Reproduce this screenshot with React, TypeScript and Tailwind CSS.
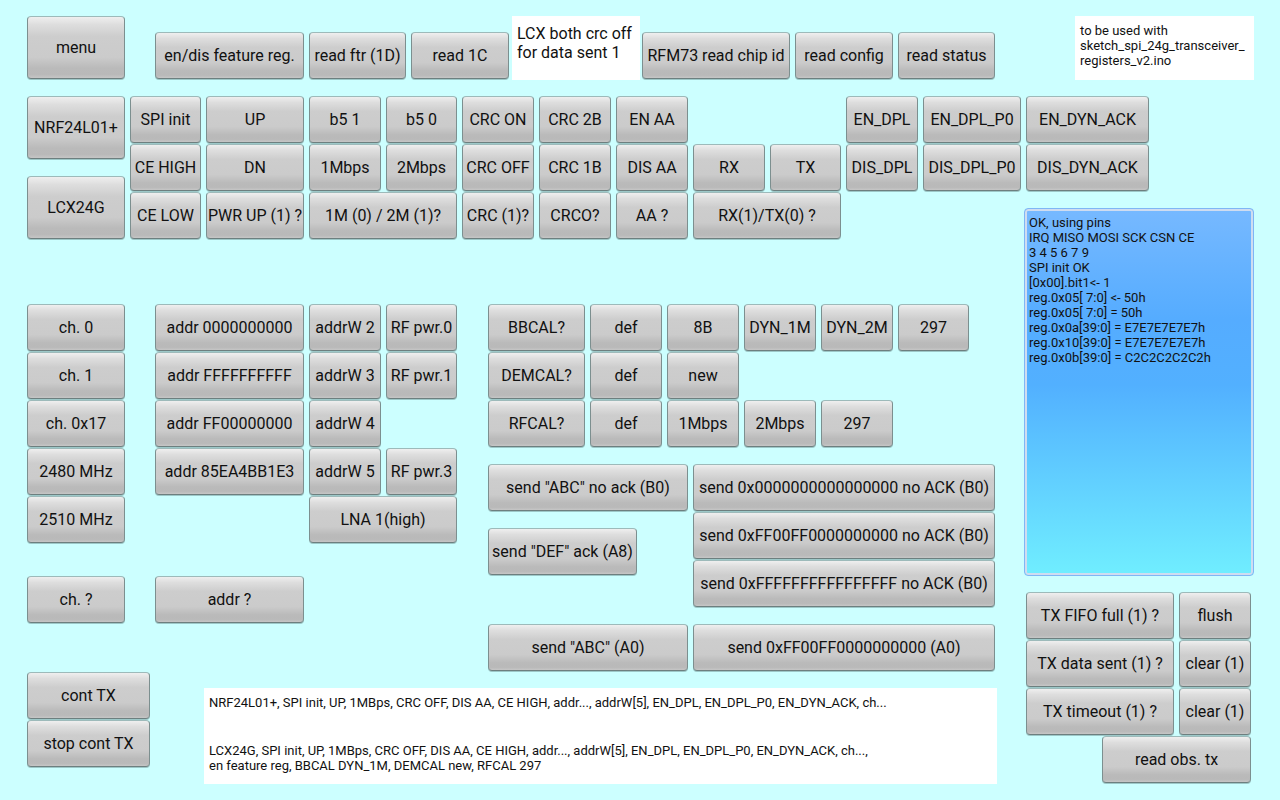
import type { ReactNode } from "react";

type Cell = { label: string; at: string };

const keyClass =
  "mb-px ml-0.5 mr-[3px] flex min-w-0 cursor-pointer items-center justify-center whitespace-nowrap rounded-[4px] border border-t-[#9dbaba] border-x-[#7c8f8f] border-b-[#6d7f7f] bg-[linear-gradient(to_bottom,#efefef_0%,#dedede_12%,#cdcdcd_32%,#cbcbcb_66%,#bababa_84%,#b9b9b9_94%,#c6c6c6_100%)] pb-px text-[16px] leading-[19px] text-[#111111] shadow-[0_1px_0_#9cc8c8] active:brightness-90";

function Panel({ name, at, cells, children }: { name: string; at: string; cells: Cell[]; children?: ReactNode }) {
  return (
    <section aria-label={name} className={`grid grid-cols-subgrid grid-rows-subgrid ${at}`}>
      {cells.map((cell) => (
        <button key={cell.at} type="button" className={`${keyClass} ${cell.at}`}>
          {cell.label}
        </button>
      ))}
      {children}
    </section>
  );
}

const toolbar: Cell[] = [
  { label: "menu", at: "col-start-1 col-span-4 row-start-1 row-span-4" },
  { label: "en/dis feature reg.", at: "col-start-6 col-span-6 row-start-2 row-span-3" },
  { label: "read ftr (1D)", at: "col-start-12 col-span-4 row-start-2 row-span-3" },
  { label: "read 1C", at: "col-start-16 col-span-4 row-start-2 row-span-3" },
  { label: "RFM73 read chip id", at: "col-start-25 col-span-6 row-start-2 row-span-3" },
  { label: "read config", at: "col-start-31 col-span-4 row-start-2 row-span-3" },
  { label: "read status", at: "col-start-35 col-span-4 row-start-2 row-span-3" },
];

const chips: Cell[] = [
  { label: "NRF24L01+", at: "col-span-4 row-start-1 row-span-4" },
  { label: "LCX24G", at: "col-span-4 row-start-6 row-span-4" },
];

const radio: Cell[] = [
  { label: "SPI init", at: "col-start-1 col-span-3 row-start-1 row-span-3" },
  { label: "UP", at: "col-start-4 col-span-4 row-start-1 row-span-3" },
  { label: "b5 1", at: "col-start-8 col-span-3 row-start-1 row-span-3" },
  { label: "b5 0", at: "col-start-11 col-span-3 row-start-1 row-span-3" },
  { label: "CRC ON", at: "col-start-14 col-span-3 row-start-1 row-span-3" },
  { label: "CRC 2B", at: "col-start-17 col-span-3 row-start-1 row-span-3" },
  { label: "EN AA", at: "col-start-20 col-span-3 row-start-1 row-span-3" },
  { label: "EN_DPL", at: "col-start-29 col-span-3 row-start-1 row-span-3" },
  { label: "EN_DPL_P0", at: "col-start-32 col-span-4 row-start-1 row-span-3" },
  { label: "EN_DYN_ACK", at: "col-start-36 col-span-5 row-start-1 row-span-3" },
  { label: "CE HIGH", at: "col-start-1 col-span-3 row-start-4 row-span-3" },
  { label: "DN", at: "col-start-4 col-span-4 row-start-4 row-span-3" },
  { label: "1Mbps", at: "col-start-8 col-span-3 row-start-4 row-span-3" },
  { label: "2Mbps", at: "col-start-11 col-span-3 row-start-4 row-span-3" },
  { label: "CRC OFF", at: "col-start-14 col-span-3 row-start-4 row-span-3" },
  { label: "CRC 1B", at: "col-start-17 col-span-3 row-start-4 row-span-3" },
  { label: "DIS AA", at: "col-start-20 col-span-3 row-start-4 row-span-3" },
  { label: "RX", at: "col-start-23 col-span-3 row-start-4 row-span-3" },
  { label: "TX", at: "col-start-26 col-span-3 row-start-4 row-span-3" },
  { label: "DIS_DPL", at: "col-start-29 col-span-3 row-start-4 row-span-3" },
  { label: "DIS_DPL_P0", at: "col-start-32 col-span-4 row-start-4 row-span-3" },
  { label: "DIS_DYN_ACK", at: "col-start-36 col-span-5 row-start-4 row-span-3" },
  { label: "CE LOW", at: "col-start-1 col-span-3 row-start-7 row-span-3" },
  { label: "PWR UP (1) ?", at: "col-start-4 col-span-4 row-start-7 row-span-3" },
  { label: "1M (0) / 2M (1)?", at: "col-start-8 col-span-6 row-start-7 row-span-3" },
  { label: "CRC (1)?", at: "col-start-14 col-span-3 row-start-7 row-span-3" },
  { label: "CRCO?", at: "col-start-17 col-span-3 row-start-7 row-span-3" },
  { label: "AA ?", at: "col-start-20 col-span-3 row-start-7 row-span-3" },
  { label: "RX(1)/TX(0) ?", at: "col-start-23 col-span-6 row-start-7 row-span-3" },
];

const channels: Cell[] = [
  { label: "ch. 0", at: "col-span-4 row-start-1 row-span-3" },
  { label: "ch. 1", at: "col-span-4 row-start-4 row-span-3" },
  { label: "ch. 0x17", at: "col-span-4 row-start-7 row-span-3" },
  { label: "2480 MHz", at: "col-span-4 row-start-10 row-span-3" },
  { label: "2510 MHz", at: "col-span-4 row-start-13 row-span-3" },
  { label: "ch. ?", at: "col-span-4 row-start-18 row-span-3" },
];

const addresses: Cell[] = [
  { label: "addr 0000000000", at: "col-start-1 col-span-6 row-start-1 row-span-3" },
  { label: "addrW 2", at: "col-start-7 col-span-3 row-start-1 row-span-3" },
  { label: "RF pwr.0", at: "col-start-10 col-span-3 row-start-1 row-span-3" },
  { label: "addr FFFFFFFFFF", at: "col-start-1 col-span-6 row-start-4 row-span-3" },
  { label: "addrW 3", at: "col-start-7 col-span-3 row-start-4 row-span-3" },
  { label: "RF pwr.1", at: "col-start-10 col-span-3 row-start-4 row-span-3" },
  { label: "addr FF00000000", at: "col-start-1 col-span-6 row-start-7 row-span-3" },
  { label: "addrW 4", at: "col-start-7 col-span-3 row-start-7 row-span-3" },
  { label: "addr 85EA4BB1E3", at: "col-start-1 col-span-6 row-start-10 row-span-3" },
  { label: "addrW 5", at: "col-start-7 col-span-3 row-start-10 row-span-3" },
  { label: "RF pwr.3", at: "col-start-10 col-span-3 row-start-10 row-span-3" },
  { label: "LNA 1(high)", at: "col-start-7 col-span-6 row-start-13 row-span-3" },
  { label: "addr ?", at: "col-start-1 col-span-6 row-start-18 row-span-3" },
];

const calibration: Cell[] = [
  { label: "BBCAL?", at: "col-start-1 col-span-4 row-start-1 row-span-3" },
  { label: "def", at: "col-start-5 col-span-3 row-start-1 row-span-3" },
  { label: "8B", at: "col-start-8 col-span-3 row-start-1 row-span-3" },
  { label: "DYN_1M", at: "col-start-11 col-span-3 row-start-1 row-span-3" },
  { label: "DYN_2M", at: "col-start-14 col-span-3 row-start-1 row-span-3" },
  { label: "297", at: "col-start-17 col-span-3 row-start-1 row-span-3" },
  { label: "DEMCAL?", at: "col-start-1 col-span-4 row-start-4 row-span-3" },
  { label: "def", at: "col-start-5 col-span-3 row-start-4 row-span-3" },
  { label: "new", at: "col-start-8 col-span-3 row-start-4 row-span-3" },
  { label: "RFCAL?", at: "col-start-1 col-span-4 row-start-7 row-span-3" },
  { label: "def", at: "col-start-5 col-span-3 row-start-7 row-span-3" },
  { label: "1Mbps", at: "col-start-8 col-span-3 row-start-7 row-span-3" },
  { label: "2Mbps", at: "col-start-11 col-span-3 row-start-7 row-span-3" },
  { label: "297", at: "col-start-14 col-span-3 row-start-7 row-span-3" },
];

const sending: Cell[] = [
  { label: 'send "ABC" no ack (B0)', at: "col-start-1 col-span-8 row-start-1 row-span-3" },
  { label: "send 0x0000000000000000 no ACK (B0)", at: "col-start-9 col-span-12 row-start-1 row-span-3" },
  { label: "send 0xFF00FF0000000000 no ACK (B0)", at: "col-start-9 col-span-12 row-start-4 row-span-3" },
  { label: 'send "DEF" ack (A8)', at: "col-start-1 col-span-6 row-start-5 row-span-3" },
  { label: "send 0xFFFFFFFFFFFFFFFF no ACK (B0)", at: "col-start-9 col-span-12 row-start-7 row-span-3" },
  { label: 'send "ABC" (A0)', at: "col-start-1 col-span-8 row-start-11 row-span-3" },
  { label: "send 0xFF00FF0000000000 (A0)", at: "col-start-9 col-span-12 row-start-11 row-span-3" },
];

const status: Cell[] = [
  { label: "TX FIFO full (1) ?", at: "col-start-1 col-span-6 row-start-1 row-span-3" },
  { label: "flush", at: "col-start-7 col-span-3 row-start-1 row-span-3" },
  { label: "TX data sent (1) ?", at: "col-start-1 col-span-6 row-start-4 row-span-3" },
  { label: "clear (1)", at: "col-start-7 col-span-3 row-start-4 row-span-3" },
  { label: "TX timeout (1) ?", at: "col-start-1 col-span-6 row-start-7 row-span-3" },
  { label: "clear (1)", at: "col-start-7 col-span-3 row-start-7 row-span-3" },
  { label: "read obs. tx", at: "col-start-4 col-span-6 row-start-10 row-span-3" },
];

const continuous: Cell[] = [
  { label: "cont TX", at: "col-span-5 row-start-1 row-span-3" },
  { label: "stop cont TX", at: "col-span-5 row-start-4 row-span-3" },
];

const log = `OK, using pins
IRQ MISO MOSI SCK CSN CE
3 4 5 6 7 9
SPI init OK
[0x00].bit1<- 1
reg.0x05[ 7:0] <- 50h
reg.0x05[ 7:0] = 50h
reg.0x0a[39:0] = E7E7E7E7E7h
reg.0x10[39:0] = E7E7E7E7E7h
reg.0x0b[39:0] = C2C2C2C2C2h`;

export default function App() {
  return (
    <main className="grid min-h-screen grid-cols-[repeat(10,25fr_26fr_25fr_26fr_26fr)] grid-rows-[repeat(50,minmax(16px,1fr))] bg-[#ccffff] font-['Roboto',sans-serif] text-[#111111]">
      <Panel name="Registers" at="col-start-2 col-span-48 row-start-2 row-span-4" cells={toolbar}>
        <p className="col-start-20 col-span-5 row-start-1 row-span-4 whitespace-nowrap bg-white px-[5px] py-2 text-[16px] leading-[19px]">
          LCX both crc off
          <br />
          for data sent 1
        </p>
        <p className="col-start-42 col-span-7 row-start-1 row-span-4 whitespace-nowrap bg-white px-[5px] py-[7px] text-[13px] leading-[15px]">
          to be used with
          <br />
          sketch_spi_24g_transceiver_
          <br />
          registers_v2.ino
        </p>
      </Panel>
      <Panel name="Chip" at="col-start-2 col-span-4 row-start-7 row-span-9" cells={chips} />
      <Panel name="Radio settings" at="col-start-6 col-span-40 row-start-7 row-span-9" cells={radio} />
      <Panel name="Channel" at="col-start-2 col-span-4 row-start-20 row-span-20" cells={channels} />
      <Panel name="Address and power" at="col-start-7 col-span-12 row-start-20 row-span-20" cells={addresses} />
      <Panel name="Calibration" at="col-start-20 col-span-20 row-start-20 row-span-9" cells={calibration} />
      <Panel name="Send" at="col-start-20 col-span-20 row-start-30 row-span-13" cells={sending} />
      <textarea
        aria-label="Log"
        readOnly
        defaultValue={log}
        className="col-start-41 col-span-9 row-start-14 row-span-23 resize-none overflow-hidden whitespace-pre rounded-[4px] border border-[#7fb6f5] bg-[linear-gradient(to_bottom,#77b9ff_0%,#55acff_30%,#52b0ff_48%,#70eeff_100%)] px-1 py-1.5 text-[13px] leading-[15px] shadow-[inset_0_0_0_2px_#cfdcf0] outline-none"
      />
      <Panel name="Transmit status" at="col-start-41 col-span-9 row-start-38 row-span-12" cells={status} />
      <Panel name="Continuous transmit" at="col-start-2 col-span-5 row-start-43 row-span-6" cells={continuous} />
      <div className="col-start-9 col-span-31 row-start-44 row-span-6 mr-px grid grid-rows-2 bg-white px-[5px] text-[13px] leading-[15px]">
        <p className="pt-[7px]">
          NRF24L01+, SPI init, UP, 1MBps, CRC OFF, DIS AA, CE HIGH, addr..., addrW[5], EN_DPL, EN_DPL_P0, EN_DYN_ACK, ch...
        </p>
        <p className="pt-[7px]">
          LCX24G, SPI init, UP, 1MBps, CRC OFF, DIS AA, CE HIGH, addr..., addrW[5], EN_DPL, EN_DPL_P0, EN_DYN_ACK, ch...,
          <br />
          en feature reg, BBCAL DYN_1M, DEMCAL new, RFCAL 297
        </p>
      </div>
    </main>
  );
}
